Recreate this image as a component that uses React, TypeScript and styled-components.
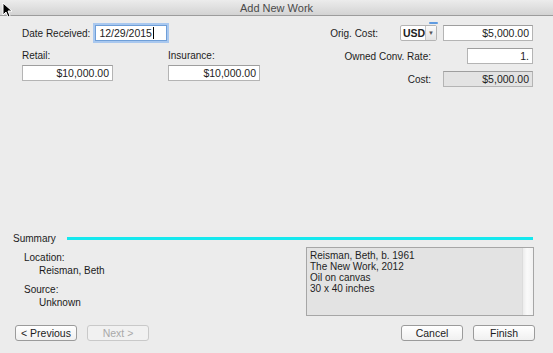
import React from "react";
import styled, { createGlobalStyle } from "styled-components";

const Global = createGlobalStyle`
  html, body { margin: 0; padding: 0; background: #ececec; }
  body { font-family: "Liberation Sans", "DejaVu Sans", sans-serif; font-size: 10px; color: #1a1a1a; }
`;

const Window = styled.div`
  position: relative;
  width: 553px;
  height: 353px;
  display: flex;
  flex-direction: column;
  background: #ececec;
  overflow: hidden;
`;

const TitleBar = styled.div`
  height: 15px;
  flex: none;
  display: flex;
  align-items: center;
  justify-content: center;
  background: linear-gradient(#ececec, #d3d3d3);
  border-bottom: 1px solid #9c9c9c;
  font-size: 11px;
  color: #4a4a4a;
`;

const Body = styled.div`
  flex: 1;
  display: flex;
  flex-direction: column;
  padding-bottom: 12px;
`;

const Top = styled.div`
  display: flex;
  justify-content: space-between;
  padding: 9px 20px 0 22px;
`;

const LeftCol = styled.div`
  display: flex;
  flex-direction: column;
  gap: 8px;
`;

const InlineField = styled.div`
  display: flex;
  align-items: center;
  gap: 5px;
  height: 16px;
`;

const FieldPair = styled.div`
  display: flex;
  gap: 55px;
`;

const StackField = styled.div`
  display: flex;
  flex-direction: column;
  gap: 3px;
`;

const Label = styled.span`
  font-size: 10px;
  color: #1c1c1c;
  white-space: nowrap;
  line-height: 13px;
`;

const Input = styled.div<{ $w: number; $disabled?: boolean; $focus?: boolean; $align?: string }>`
  box-sizing: border-box;
  width: ${(p) => p.$w}px;
  height: 16px;
  background: ${(p) => (p.$disabled ? "#e3e3e3" : "#ffffff")};
  border: 1px solid ${(p) => (p.$focus ? "#6f9fd8" : "#b4b4b4")};
  border-top-color: ${(p) => (p.$focus ? "#6f9fd8" : "#9e9e9e")};
  box-shadow: ${(p) => (p.$focus ? "0 0 0 2px #a9c8ef" : "none")};
  display: flex;
  align-items: center;
  justify-content: ${(p) => (p.$align === "left" ? "flex-start" : "flex-end")};
  padding: 0 3px;
  font-size: 10.5px;
  color: #222;
  white-space: nowrap;
`;

const Caret = styled.span`
  display: inline-block;
  width: 1px;
  height: 12px;
  background: #000;
  margin-left: 1px;
`;

const RightCol = styled.div`
  display: flex;
  flex-direction: column;
  gap: 7px;
`;

const RightRow = styled.div<{ $gap: number }>`
  display: flex;
  align-items: center;
  justify-content: flex-end;
  height: 16px;
  gap: ${(p) => p.$gap}px;
`;

const CostGroup = styled.div`
  display: flex;
  align-items: center;
  gap: 6px;
`;

const Popup = styled.div`
  position: relative;
  box-sizing: border-box;
  width: 37px;
  height: 16px;
  display: flex;
  background: #fff;
  border: 1px solid #b4b4b4;
  border-radius: 2px;
`;

const PopupValue = styled.span`
  flex: 1;
  display: flex;
  align-items: center;
  padding-left: 2px;
  font-size: 10.5px;
  font-weight: bold;
  color: #222;
`;

const PopupArrow = styled.span`
  width: 11px;
  border-left: 1px solid #c4c4c4;
  background: linear-gradient(#fafafa, #e4e4e4);
  display: flex;
  align-items: center;
  justify-content: center;
  font-size: 6px;
  color: #555;
`;

const FocusTab = styled.span`
  position: absolute;
  right: -2px;
  top: -4px;
  width: 9px;
  height: 2px;
  border-radius: 1px;
  background: #5f9be0;
`;

const Spacer = styled.div`
  flex: 1;
`;

const SummaryHeader = styled.div`
  display: flex;
  align-items: center;
  gap: 11px;
  padding: 0 20px 0 13px;
  height: 12px;
`;

const SummaryTitle = styled.span`
  font-size: 10px;
  color: #1c1c1c;
`;

const CyanLine = styled.div`
  flex: 1;
  height: 3px;
  background: #14e8ee;
`;

const SummaryBody = styled.div`
  display: flex;
  justify-content: space-between;
  padding: 3px 19px 0 24px;
`;

const InfoList = styled.div`
  display: flex;
  flex-direction: column;
  gap: 6px;
  padding-top: 4px;
`;

const InfoGroup = styled.div`
  display: flex;
  flex-direction: column;
  line-height: 13px;
  font-size: 10px;
`;

const InfoValue = styled.span`
  padding-left: 15px;
`;

const TextBox = styled.div`
  box-sizing: border-box;
  width: 228px;
  height: 69px;
  display: flex;
  border: 1px solid #a6a6a6;
  background: #e3e3e3;
`;

const TextContent = styled.div`
  flex: 1;
  padding: 2px 3px;
  font-size: 10px;
  line-height: 11px;
  color: #1e1e1e;
`;

const ScrollTrack = styled.div`
  width: 10px;
  background: linear-gradient(90deg, #ececec, #fafafa 40%, #f2f2f2);
  border-left: 1px solid #dcdcdc;
`;

const ButtonRow = styled.div`
  display: flex;
  justify-content: space-between;
  padding: 9px 18px 0 15px;
`;

const ButtonGroup = styled.div`
  display: flex;
  gap: 10px;
`;

const Button = styled.button<{ $disabled?: boolean }>`
  box-sizing: border-box;
  width: 62px;
  height: 16px;
  padding: 0;
  border-radius: 3px;
  border: 1px solid ${(p) => (p.$disabled ? "#c9c9c9" : "#9b9b9b")};
  background: ${(p) => (p.$disabled ? "#f1f1f1" : "linear-gradient(#ffffff, #f0f0f0)")};
  font-family: "Liberation Sans", "DejaVu Sans", sans-serif;
  font-size: 10.5px;
  color: ${(p) => (p.$disabled ? "#a9a9a9" : "#1c1c1c")};
  line-height: 14px;
`;

const Cursor = styled.svg`
  position: absolute;
  left: 2px;
  top: 2px;
`;

export default function App() {
  return (
    <Window>
      <Global />
      <TitleBar>Add New Work</TitleBar>
      <Body>
        <Top>
          <LeftCol>
            <InlineField>
              <Label>Date Received:</Label>
              <Input $w={72} $focus $align="left">
                12/29/2015
                <Caret />
              </Input>
            </InlineField>
            <FieldPair>
              <StackField>
                <Label>Retail:</Label>
                <Input $w={91}>$10,000.00</Input>
              </StackField>
              <StackField>
                <Label>Insurance:</Label>
                <Input $w={92}>$10,000.00</Input>
              </StackField>
            </FieldPair>
          </LeftCol>
          <RightCol>
            <RightRow $gap={22}>
              <Label>Orig. Cost:</Label>
              <CostGroup>
                <Popup>
                  <PopupValue>USD</PopupValue>
                  <PopupArrow>▼</PopupArrow>
                  <FocusTab />
                </Popup>
                <Input $w={90}>$5,000.00</Input>
              </CostGroup>
            </RightRow>
            <RightRow $gap={36}>
              <Label>Owned Conv. Rate:</Label>
              <Input $w={66}>1.</Input>
            </RightRow>
            <RightRow $gap={12}>
              <Label>Cost:</Label>
              <Input $w={90} $disabled>
                $5,000.00
              </Input>
            </RightRow>
          </RightCol>
        </Top>
        <Spacer />
        <SummaryHeader>
          <SummaryTitle>Summary</SummaryTitle>
          <CyanLine />
        </SummaryHeader>
        <SummaryBody>
          <InfoList>
            <InfoGroup>
              <span>Location:</span>
              <InfoValue>Reisman, Beth</InfoValue>
            </InfoGroup>
            <InfoGroup>
              <span>Source:</span>
              <InfoValue>Unknown</InfoValue>
            </InfoGroup>
          </InfoList>
          <TextBox>
            <TextContent>
              Reisman, Beth, b. 1961
              <br />
              The New Work, 2012
              <br />
              Oil on canvas
              <br />
              30 x 40 inches
            </TextContent>
            <ScrollTrack />
          </TextBox>
        </SummaryBody>
        <ButtonRow>
          <ButtonGroup>
            <Button>&lt; Previous</Button>
            <Button $disabled>Next &gt;</Button>
          </ButtonGroup>
          <ButtonGroup>
            <Button>Cancel</Button>
            <Button>Finish</Button>
          </ButtonGroup>
        </ButtonRow>
      </Body>
      <Cursor width="10" height="16" viewBox="0 0 10 16">
        <path d="M1 1 L1 13 L4 10 L6 15 L8 14 L6 9 L10 9 Z" fill="#000" stroke="#fff" strokeWidth="1" />
      </Cursor>
    </Window>
  );
}
